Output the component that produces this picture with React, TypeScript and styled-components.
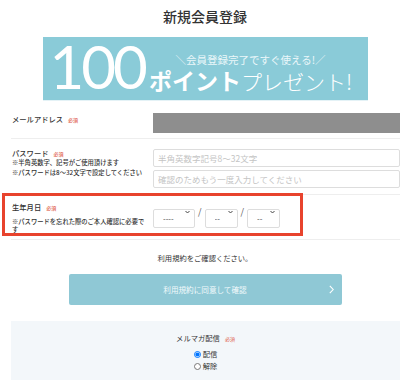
import React from 'react';
import styled, { createGlobalStyle } from 'styled-components';

const GlobalStyle = createGlobalStyle`
  body {
    margin: 0;
    background: #fff;
    color: #333;
    font-family: "Noto Sans CJK JP", "Noto Sans", sans-serif;
  }
`;

const Page = styled.div`
  width: 410px;
`;

const Title = styled.h1`
  margin: 0;
  padding-top: 8px;
  font-size: 14px;
  line-height: 16px;
  font-weight: 500;
  text-align: center;
  color: #333;
`;

const Banner = styled.div`
  display: flex;
  align-items: flex-start;
  box-sizing: border-box;
  width: 325px;
  height: 63px;
  margin: 13px auto 0;
  padding-left: 7px;
  background: #8acbd8;
  box-shadow: 0 1px 0 #e4f2f6;
  color: #fff;
`;

const BigNum = styled.span`
  font-family: Lato, "Open Sans", sans-serif;
  font-weight: 400;
  font-size: 60px;
  line-height: 58px;
  letter-spacing: -3px;
`;

const BannerCopy = styled.div`
  display: flex;
  flex-direction: column;
  align-items: center;
  margin-left: 4px;
  padding-top: 16px;
`;

const Catch = styled.span`
  font-size: 10.5px;
  line-height: 14px;
  color: #eaf7fa;
  white-space: nowrap;
`;

const PointLine = styled.div`
  display: flex;
  align-items: baseline;
  line-height: 27px;
  white-space: nowrap;
`;

const PointStrong = styled.span`
  font-size: 23px;
  font-weight: 700;
`;

const PointLight = styled.span`
  font-size: 21px;
  font-weight: 300;
`;

const Form = styled.div`
  margin: 3px 10px 0 11px;
`;

const Row = styled.div<{ $pt: number; $pb: number }>`
  position: relative;
  display: grid;
  grid-template-columns: 137px 1fr;
  align-items: start;
  column-gap: 4px;
  padding: ${(p) => p.$pt}px 0 ${(p) => p.$pb}px 1px;
  border-bottom: 1px solid #eeeeee;
`;

const LabelCol = styled.div<{ $pt?: number }>`
  padding-top: ${(p) => p.$pt || 0}px;
`;

const Label = styled.div`
  font-size: 7.3px;
  line-height: 8px;
  font-weight: 500;
  color: #333;
`;

const Required = styled.span`
  margin-left: 5px;
  font-size: 5px;
  color: #e0604c;
`;

const Note = styled.div<{ $lh: number; $mt: number }>`
  margin-top: ${(p) => p.$mt}px;
  font-size: 6.3px;
  line-height: ${(p) => p.$lh}px;
  font-weight: 500;
  color: #333;
`;

const NoteLine = styled.span`
  white-space: nowrap;
`;

const Redacted = styled.div`
  height: 20px;
  background: #8e8e8e;
`;

const Input = styled.input`
  display: block;
  box-sizing: border-box;
  width: 100%;
  height: 18px;
  padding: 0 4px;
  border: 1px solid #dddddd;
  border-radius: 2px;
  font-family: inherit;
  font-size: 8.5px;
  &::placeholder {
    color: #c4c4c4;
  }
  & + & {
    margin-top: 3px;
  }
`;

const DateFields = styled.div`
  display: flex;
  align-items: center;
`;

const SelectBox = styled.div<{ $w: number }>`
  position: relative;
  width: ${(p) => p.$w}px;
  height: 19px;
`;

const Select = styled.select`
  appearance: none;
  box-sizing: border-box;
  width: 100%;
  height: 100%;
  padding: 0 0 0 9px;
  border: 1px solid #dddddd;
  border-radius: 2px;
  background: #fff;
  color: #555;
  font-family: "Liberation Sans", Arial, sans-serif;
  font-size: 8px;
`;

const Caret = styled.svg`
  position: absolute;
  right: 5px;
  top: 8px;
  width: 5px;
  height: 4px;
  pointer-events: none;
`;

const Slash = styled.span`
  margin: 0 3px;
  font-size: 9px;
  color: #555;
`;

const Highlight = styled.span`
  position: absolute;
  left: -9px;
  top: -2px;
  box-sizing: border-box;
  width: 301px;
  height: 43px;
  border: 3px solid #e8432d;
  pointer-events: none;
`;

const Terms = styled.p`
  margin: 13px 0 0;
  font-size: 7.3px;
  line-height: 10px;
  text-align: center;
  color: #333;
`;

const Submit = styled.button`
  position: relative;
  display: flex;
  align-items: center;
  justify-content: center;
  width: 273px;
  height: 31px;
  margin: 11px auto 0;
  border: none;
  border-radius: 2px;
  background: #8fc8d5;
  color: #f2fafc;
  font-family: inherit;
  font-size: 7.6px;
`;

const Chevron = styled.svg`
  position: absolute;
  right: 8px;
  top: 11px;
  width: 5px;
  height: 9px;
`;

const Panel = styled.div`
  display: flex;
  flex-direction: column;
  align-items: center;
  margin: 16px 10px 0 11px;
  padding: 12px 0 24px;
  background: #f3f7fa;
`;

const PanelTitle = styled.div`
  font-size: 7.3px;
  line-height: 10px;
  color: #333;
`;

const Options = styled.div`
  display: flex;
  flex-direction: column;
  margin-top: 4px;
`;

const Option = styled.label`
  display: flex;
  align-items: center;
  gap: 2px;
  font-size: 7.3px;
  line-height: 12px;
  color: #333;
`;

const Radio = styled.input`
  width: 7px;
  height: 7px;
  margin: 0;
`;

const CaretIcon = () => (
  <Caret viewBox="0 0 10 7">
    <path d="M1 1.5 5 5.5 9 1.5" fill="none" stroke="#444" strokeWidth="2" />
  </Caret>
);

const DateSelect = ({ width, blank }: { width: number; blank: string }) => (
  <SelectBox $w={width}>
    <Select defaultValue="">
      <option value="">{blank}</option>
    </Select>
    <CaretIcon />
  </SelectBox>
);

export default function App() {
  return (
    <Page>
      <GlobalStyle />
      <Title>新規会員登録</Title>
      <Banner>
        <BigNum>100</BigNum>
        <BannerCopy>
          <Catch>＼会員登録完了ですぐ使える!／</Catch>
          <PointLine>
            <PointStrong>ポイント</PointStrong>
            <PointLight>プレゼント!</PointLight>
          </PointLine>
        </BannerCopy>
      </Banner>

      <Form>
        <Row $pt={10} $pb={5}>
          <LabelCol $pt={2}>
            <Label>
              メールアドレス<Required>必須</Required>
            </Label>
          </LabelCol>
          <Redacted />
        </Row>

        <Row $pt={10} $pb={6}>
          <LabelCol>
            <Label>
              パスワード<Required>必須</Required>
            </Label>
            <Note $lh={10} $mt={0}>
              <NoteLine>※半角英数字、記号がご使用頂けます</NoteLine>
              <br />
              <NoteLine>※パスワードは8〜32文字で設定してください</NoteLine>
            </Note>
          </LabelCol>
          <div>
            <Input type="password" placeholder="半角英数字記号8〜32文字" />
            <Input type="password" placeholder="確認のためもう一度入力してください" />
          </div>
        </Row>

        <Row $pt={7} $pb={5}>
          <LabelCol $pt={1}>
            <Label>
              生年月日<Required>必須</Required>
            </Label>
            <Note $lh={8} $mt={6}>
              <NoteLine>※パスワードを忘れた際のご本人確認に必要で</NoteLine>
              <br />
              す
            </Note>
          </LabelCol>
          <DateFields>
            <DateSelect width={42} blank="----" />
            <Slash>/</Slash>
            <DateSelect width={33} blank="--" />
            <Slash>/</Slash>
            <DateSelect width={33} blank="--" />
          </DateFields>
          <Highlight />
        </Row>
      </Form>

      <Terms>利用規約をご確認ください。</Terms>
      <Submit type="button">
        利用規約に同意して確認
        <Chevron viewBox="0 0 5 9">
          <path d="M0.8 0.8 4.2 4.5 0.8 8.2" fill="none" stroke="#fff" strokeWidth="1.1" />
        </Chevron>
      </Submit>

      <Panel>
        <PanelTitle>
          メルマガ配信<Required>必須</Required>
        </PanelTitle>
        <Options>
          <Option>
            <Radio type="radio" name="mailmag" defaultChecked />
            配信
          </Option>
          <Option>
            <Radio type="radio" name="mailmag" />
            解除
          </Option>
        </Options>
      </Panel>
    </Page>
  );
}
